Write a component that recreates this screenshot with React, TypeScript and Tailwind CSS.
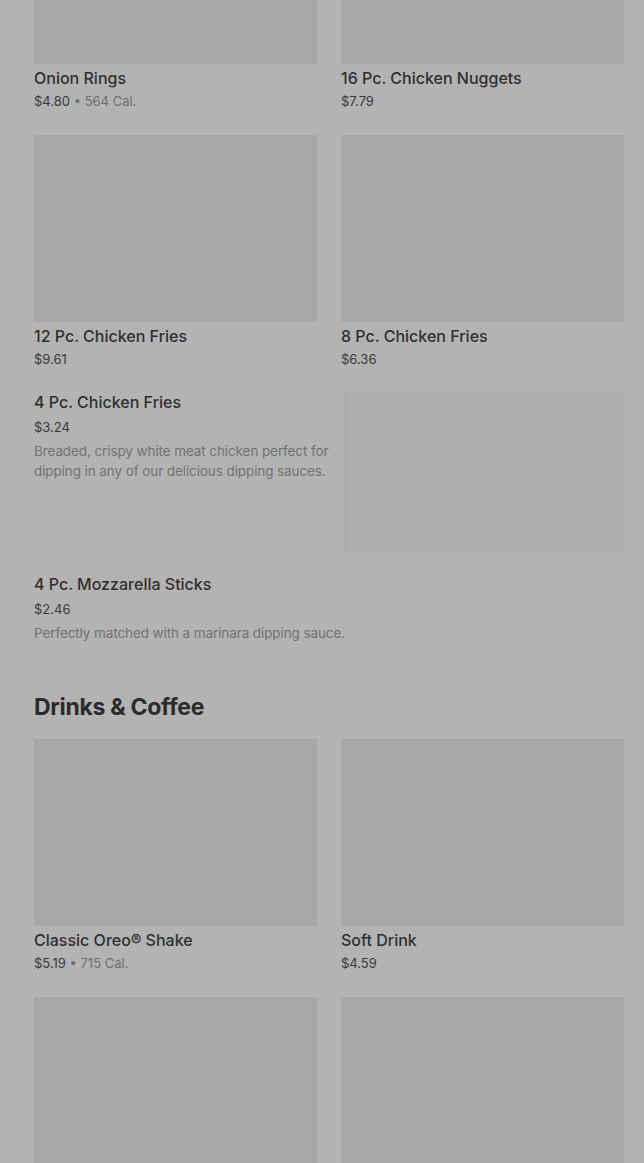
const gridRows: { name: string; price: string; cal?: string }[][] = [
  [
    { name: 'Onion Rings', price: '$4.80', cal: '564 Cal.' },
    { name: '16 Pc. Chicken Nuggets', price: '$7.79' },
  ],
  [
    { name: '12 Pc. Chicken Fries', price: '$9.61' },
    { name: '8 Pc. Chicken Fries', price: '$6.36' },
  ],
];

const drinkRows: { name: string; price: string; cal?: string }[][] = [
  [
    { name: 'Classic Oreo® Shake', price: '$5.19', cal: '715 Cal.' },
    { name: 'Soft Drink', price: '$4.59' },
  ],
  [
    { name: '', price: '' },
    { name: '', price: '' },
  ],
];

function GridItem({ name, price, cal }: { name: string; price: string; cal?: string }) {
  return (
    <div className="pb-6">
      <div className="h-[187px] bg-[#a7a7a7]" />
      {name && (
        <>
          <div className="mt-[4px] text-[16px] leading-5 font-medium text-[#2f2f2f]">{name}</div>
          <div className="mt-[3px] text-[13px] leading-5 text-[#3a3a3a]">
            {price}
            {cal && <span className="text-[#6f6f6f]"> • {cal}</span>}
          </div>
        </>
      )}
    </div>
  );
}

function GridSection({ rows }: { rows: { name: string; price: string; cal?: string }[][] }) {
  return (
    <div>
      {rows.map((row, i) => (
        <div key={i} className="grid grid-cols-2 gap-x-6">
          {row.map((item, j) => (
            <GridItem key={j} {...item} />
          ))}
        </div>
      ))}
    </div>
  );
}

export default function App() {
  return (
    <div
      className="min-h-screen bg-[#b3b3b3] pl-[34px] pr-[20px] overflow-hidden"
      style={{ fontFamily: 'Inter, "Noto Sans", sans-serif' }}
    >
      <div className="-mt-[123px]">
        <GridSection rows={gridRows} />

        <div className="-mt-px flex pb-[22px]">
          <div className="w-[306px] shrink-0">
            <div className="text-[16px] leading-5 font-medium text-[#2f2f2f]">4 Pc. Chicken Fries</div>
            <div className="mt-[5px] text-[13px] leading-5 text-[#3a3a3a]">$3.24</div>
            <div className="mt-[4px] text-[13.5px] leading-5 text-[#727272] tracking-[-0.1px]">
              Breaded, crispy white meat chicken perfect for dipping in any of our delicious dipping sauces.
            </div>
          </div>
          <div className="ml-[4px] flex-1 h-[160px] bg-[#adadad] border-l-[3px] border-[#aaaaaa]" />
        </div>

        <div className="pb-6">
          <div className="text-[16px] leading-5 font-medium text-[#2f2f2f]">4 Pc. Mozzarella Sticks</div>
          <div className="mt-[5px] text-[13px] leading-5 text-[#3a3a3a]">$2.46</div>
          <div className="mt-[4px] text-[13.5px] leading-5 text-[#727272] tracking-[-0.1px]">
            Perfectly matched with a marinara dipping sauce.
          </div>
        </div>

        <h2 className="mt-[24px] text-[23px] leading-8 font-bold text-[#2b2b2b] tracking-[-0.3px]">Drinks &amp; Coffee</h2>

        <div className="mt-[16px]">
          <GridSection rows={drinkRows} />
        </div>
      </div>
    </div>
  );
}
